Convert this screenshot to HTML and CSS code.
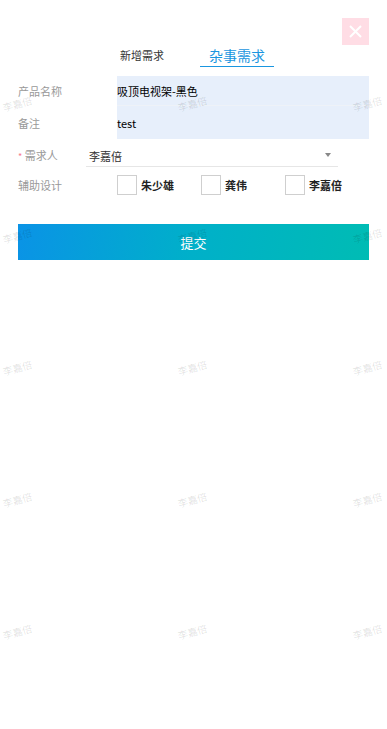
FILE: index.html
```html
<!DOCTYPE html>
<html lang="zh-CN">
<head>
<meta charset="utf-8">
<title>杂事需求</title>
<link rel="stylesheet" href="styles.css">
</head>
<body>
<div class="page">
  <div class="topbar">
    <a class="close" href="#"><svg width="13" height="13" viewBox="0 0 13 13"><path d="M1 1L12 12M12 1L1 12" stroke="#fff" stroke-width="2"/></svg></a>
  </div>

  <div class="tabs">
    <span class="tab">新增需求</span>
    <span class="tab active">杂事需求</span>
  </div>

  <div class="form">
    <div class="row">
      <span class="label">产品名称</span>
      <span class="value fill first">吸顶电视架-黑色</span>
    </div>
    <div class="row">
      <span class="label">备注</span>
      <span class="value fill second">test</span>
    </div>
    <div class="row select-row">
      <span class="label"><i class="req">*</i> 需求人</span>
      <span class="select">李嘉倍<b class="caret"></b></span>
    </div>
    <div class="row check-row">
      <span class="label">辅助设计</span>
      <div class="checks">
        <label class="check"><span class="box"></span>朱少雄</label>
        <label class="check"><span class="box"></span>龚伟</label>
        <label class="check"><span class="box"></span>李嘉倍</label>
      </div>
    </div>
  </div>

  <button class="submit">提交</button>
</div>

<div class="watermark">
  <div class="wm-grid">
    <span>李嘉倍</span><span>李嘉倍</span><span>李嘉倍</span>
    <span>李嘉倍</span><span>李嘉倍</span><span>李嘉倍</span>
    <span>李嘉倍</span><span>李嘉倍</span><span>李嘉倍</span>
    <span>李嘉倍</span><span>李嘉倍</span><span>李嘉倍</span>
    <span>李嘉倍</span><span>李嘉倍</span><span>李嘉倍</span>
  </div>
</div>
</body>
</html>
```

FILE: styles.css
```css
/* 杂事需求 form */

html, body
{ margin: 0;
padding: 0;
background: #fff;
overflow: hidden;
}

body
{ font-family: "Noto Sans CJK SC", "Liberation Sans", sans-serif;
font-size: 11px;
line-height: 14px;
color: #333;
position: relative;
height: 729px;
}

div.page
{ padding: 18px 18px 0 18px;
}

div.topbar
{ display: flex;
justify-content: flex-end;
height: 27px;
}

a.close
{ width: 27px;
height: 27px;
background: #ffdde5;
display: flex;
align-items: center;
justify-content: center;
}

div.tabs
{ display: flex;
margin-left: 102px;
height: 31px;
align-items: flex-start;
}

span.tab
{ font-size: 11px;
color: #333;
line-height: 16px;
margin-top: 2px;
}

span.tab.active
{ font-size: 14px;
color: #1a96e0;
margin-left: 36px;
margin-top: 1px;
padding: 0 9px 1px 9px;
line-height: 19px;
border-bottom: 1.5px solid #1a96e0;
}

div.row
{ display: flex;
align-items: center;
}

span.label
{ width: 99px;
flex: none;
color: #999;
}

i.req
{ font-style: normal;
color: #f87b8e;
font-size: 9px;
}

span.value.fill
{ flex: 1;
background: #e7effb;
color: #000;
display: flex;
align-items: center;
}

span.value.first
{ height: 29px;
border-bottom: 1px solid #eef2f8;
}

span.value.second
{ height: 33px;
}

div.select-row
{ padding-top: 6px;
}

div.select-row span.label
{ width: 68px;
}

span.select
{ width: 249px;
height: 21px;
padding-left: 3px;
display: flex;
align-items: center;
color: #333;
border-bottom: 1px solid #e6e6e6;
position: relative;
}

b.caret
{ position: absolute;
right: 7px;
top: 8px;
border-left: 3.5px solid transparent;
border-right: 3.5px solid transparent;
border-top: 4px solid #888;
}

div.check-row
{ height: 20px;
margin-top: 8px;
}

div.checks
{ display: flex;
}

label.check
{ width: 84px;
display: flex;
align-items: center;
font-weight: bold;
color: #222;
}

span.box
{ width: 18px;
height: 18px;
border: 1px solid #cfcfcf;
margin-right: 4px;
}

button.submit
{ display: block;
width: 100%;
height: 36px;
margin-top: 29px;
border: 0;
background: linear-gradient(100deg, #0a93e6 0%, #00b0c9 50%, #00bcb4 100%);
color: #fff;
font-family: "Noto Sans CJK SC", sans-serif;
font-size: 13px;
}

/* watermark overlay */

div.watermark
{ position: absolute;
top: 0;
left: 0;
right: 0;
bottom: 0;
overflow: hidden;
pointer-events: none;
}

div.wm-grid
{ margin: 38px 0 0 -70px;
width: 525px;
display: flex;
flex-wrap: wrap;
}

div.wm-grid span
{ width: 175px;
height: 132px;
display: flex;
align-items: center;
justify-content: center;
font-size: 10px;
color: rgba(0, 0, 0, 0.12);
transform: rotate(-15deg);
}
```
